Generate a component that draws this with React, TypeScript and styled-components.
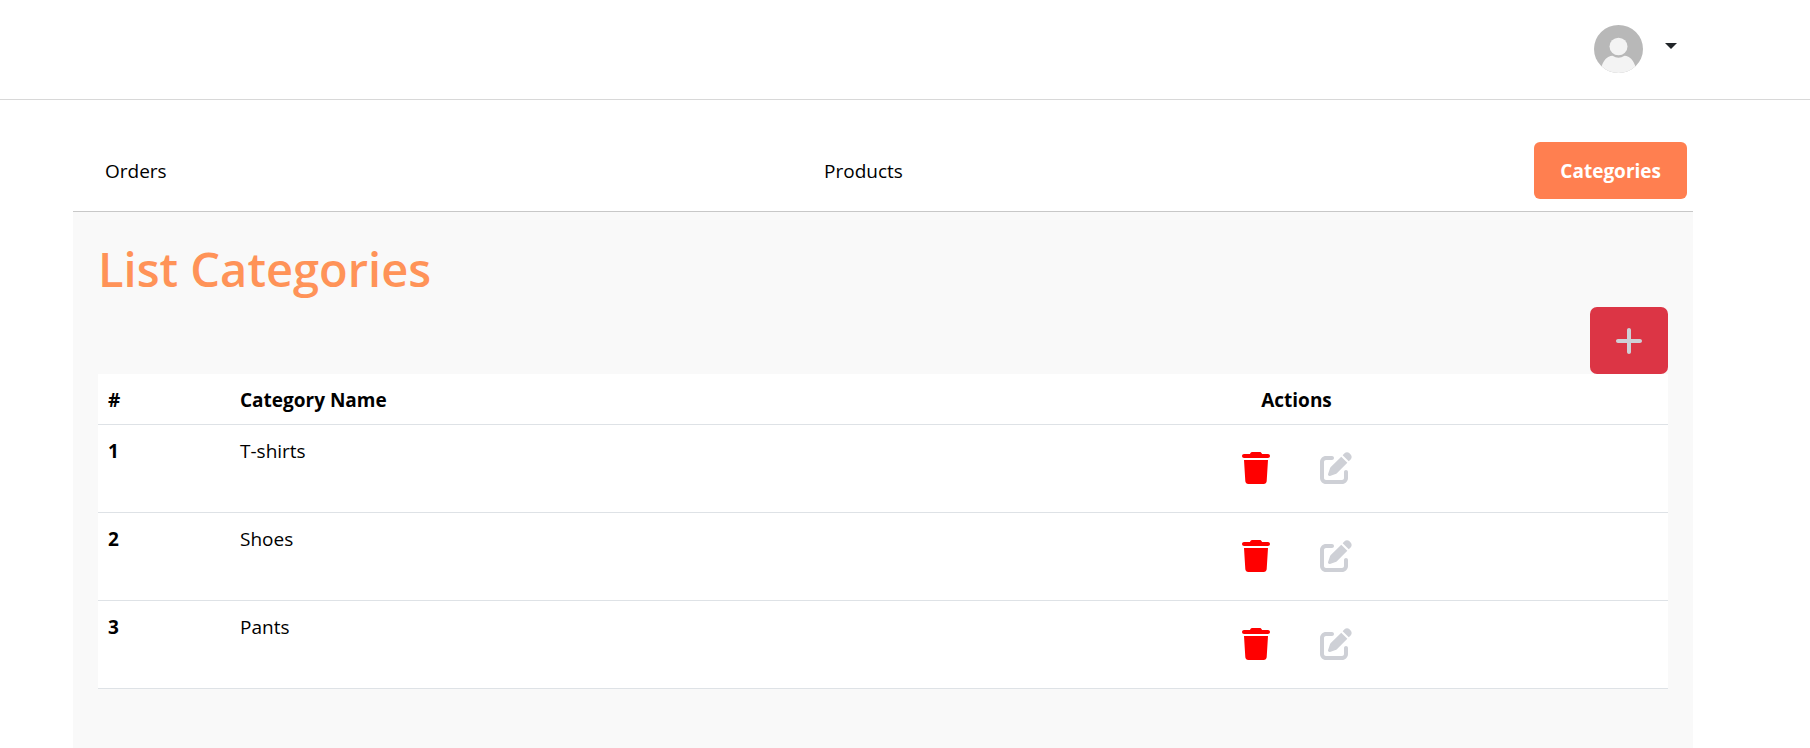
import React from "react";
import styled, { createGlobalStyle } from "styled-components";
import { FaPenToSquare, FaPlus, FaTrash } from "react-icons/fa6";

const GlobalStyle = createGlobalStyle`
  *, *::before, *::after { box-sizing: border-box; }
  body {
    margin: 0;
    background: #fff;
    color: #000;
    font-family: "Open Sans", "Noto Sans", sans-serif;
    font-size: 19px;
    line-height: 30px;
  }
  button { font: inherit; cursor: pointer; }
`;

const Page = styled.div`
  display: flex;
  flex-direction: column;
  min-height: 100vh;
`;

const TopBar = styled.header`
  display: flex;
  justify-content: flex-end;
  align-items: center;
  height: 100px;
  padding: 0 133px 1px 0;
  border-bottom: 1px solid #d8d8d8;
`;

const AccountButton = styled.button`
  display: flex;
  align-items: center;
  gap: 22px;
  padding: 0;
  border: 0;
  background: none;
`;

const Avatar = styled.svg`
  width: 49px;
  height: 48px;
`;

const Caret = styled.span`
  margin-bottom: 7px;
  border-top: 6px solid #212529;
  border-left: 6px solid transparent;
  border-right: 6px solid transparent;
`;

const Content = styled.main`
  display: flex;
  flex: 1;
  flex-direction: column;
  margin: 0 117px 0 73px;
`;

const Tabs = styled.nav`
  display: flex;
  justify-content: space-between;
  padding: 42px 6px 12px;
  border-bottom: 1px solid #c8c8c8;
`;

const Tab = styled.a<{ $active?: boolean }>`
  padding: 14px 26px 13px;
  border-radius: 6px;
  background: ${(p) => (p.$active ? "#ff7f50" : "transparent")};
  color: ${(p) => (p.$active ? "#fff" : "#000")};
  font-weight: ${(p) => (p.$active ? 700 : 400)};
  text-decoration: none;
`;

const Panel = styled.section`
  display: flex;
  flex: 1;
  flex-direction: column;
  padding: 27px 25px 25px;
  background: #f9f9f9;
`;

const Title = styled.h1`
  margin: 0 0 8px;
  color: #ff9358;
  font-size: 47px;
  font-weight: 600;
  line-height: 60px;
`;

const IconButton = styled.button<{ $color: string; $fill?: string }>`
  display: flex;
  align-items: center;
  justify-content: center;
  height: 67px;
  padding: 0 25px;
  border: 0;
  border-radius: 7px;
  background: ${(p) => p.$fill ?? "transparent"};
  color: ${(p) => p.$color};
`;

const PlusIcon = styled(FaPlus)`
  width: 28px;
  height: 32px;
`;

const TrashIcon = styled(FaTrash)`
  width: 28px;
  height: 32px;
`;

const EditIcon = styled(FaPenToSquare)`
  width: 32px;
  height: 32px;
`;

const Toolbar = styled.div`
  display: flex;
  justify-content: flex-end;
`;

const Table = styled.table`
  width: 100%;
  border-collapse: separate;
  border-spacing: 0;
  table-layout: fixed;
  background: #fff;

  th, td {
    padding: 11px 10px 9px;
    border-bottom: 1px solid #dee2e6;
    text-align: left;
    vertical-align: top;
  }
`;

const HeadCell = styled.th<{ $width?: string }>`
  width: ${(p) => p.$width ?? "auto"};
`;

const CenteredLabel = styled.div`
  text-align: center;
`;

const ActionsCell = styled.td`
  && { padding: 9px 10px 11px; }
`;

const Actions = styled.div`
  display: flex;
  justify-content: center;
`;

const categories = ["T-shirts", "Shoes", "Pants"];

export default function App() {
  return (
    <>
      <GlobalStyle />
      <Page>
        <TopBar>
          <AccountButton type="button" aria-label="Account menu">
            <Avatar viewBox="0 0 49 49" preserveAspectRatio="none" aria-hidden="true">
              <defs>
                <clipPath id="avatar-disc">
                  <circle cx="24.5" cy="24.5" r="24.5" />
                </clipPath>
              </defs>
              <g clipPath="url(#avatar-disc)">
                <rect width="49" height="49" fill="#b8b8b8" />
                <circle cx="24.5" cy="22" r="9" fill="#f3f3f3" />
                <path
                  d="M7 44C9.500 36 13 32 18.500 31.500C22.500 34 26.500 34 30.500 31.500C36 32 39.500 36 42 44V49H7Z"
                  fill="#f3f3f3"
                />
              </g>
            </Avatar>
            <Caret />
          </AccountButton>
        </TopBar>
        <Content>
          <Tabs>
            <Tab href="#orders">Orders</Tab>
            <Tab href="#products">Products</Tab>
            <Tab href="#categories" $active aria-current="page">
              Categories
            </Tab>
          </Tabs>
          <Panel>
            <Title>List Categories</Title>
            <Toolbar>
              <IconButton type="button" aria-label="Add category" $color="#ced0d6" $fill="#dc3545">
                <PlusIcon />
              </IconButton>
            </Toolbar>
            <Table>
              <thead>
                <tr>
                  <HeadCell scope="col" $width="132px">#</HeadCell>
                  <HeadCell scope="col">Category Name</HeadCell>
                  <HeadCell scope="col" $width="743px">
                    <CenteredLabel>Actions</CenteredLabel>
                  </HeadCell>
                </tr>
              </thead>
              <tbody>
                {categories.map((name, index) => (
                  <tr key={name}>
                    <th scope="row">{index + 1}</th>
                    <td>{name}</td>
                    <ActionsCell>
                      <Actions>
                        <IconButton type="button" aria-label={`Delete ${name}`} $color="#ff0000">
                          <TrashIcon />
                        </IconButton>
                        <IconButton type="button" aria-label={`Edit ${name}`} $color="#ced0d6">
                          <EditIcon />
                        </IconButton>
                      </Actions>
                    </ActionsCell>
                  </tr>
                ))}
              </tbody>
            </Table>
          </Panel>
        </Content>
      </Page>
    </>
  );
}
